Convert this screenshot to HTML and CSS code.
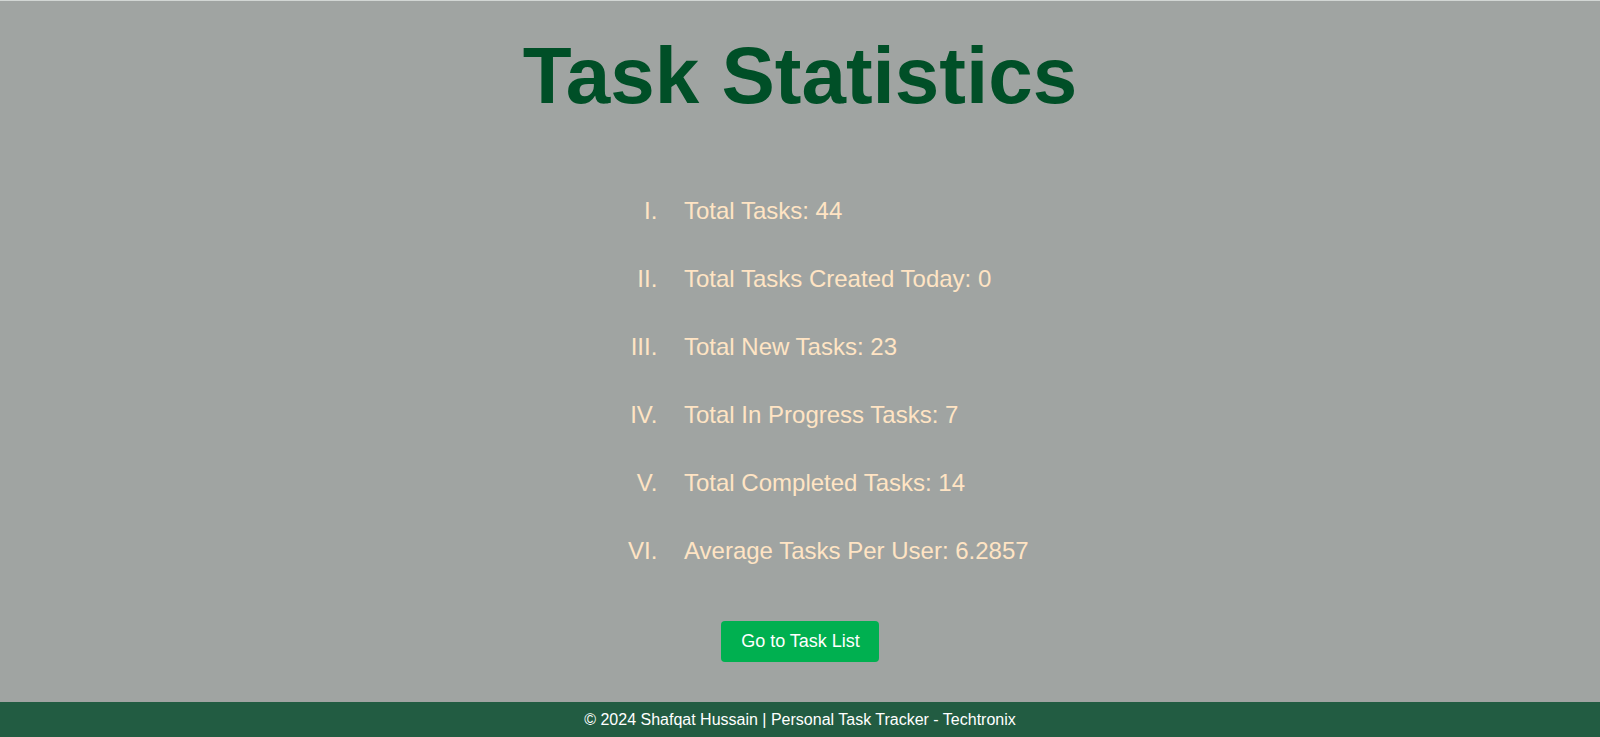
FILE: index.html
```html
<!DOCTYPE html>
<html lang="en">
<head>
<meta charset="utf-8">
<title>Task Statistics</title>
<link rel="stylesheet" href="styles.css">
</head>
<body>
<main class="page">
  <h1 class="title">Task Statistics</h1>
  <ol class="stats">
    <li class="stat">Total Tasks: 44</li>
    <li class="stat">Total Tasks Created Today: 0</li>
    <li class="stat">Total New Tasks: 23</li>
    <li class="stat">Total In Progress Tasks: 7</li>
    <li class="stat">Total Completed Tasks: 14</li>
    <li class="stat">Average Tasks Per User: 6.2857</li>
  </ol>
  <div class="actions">
    <a class="btn" href="#">Go to Task List</a>
  </div>
</main>
<footer class="footer">© 2024 Shafqat Hussain | Personal Task Tracker - Techtronix</footer>
</body>
</html>
```
FILE: styles.css
```css
html, body {
  margin: 0;
  padding: 0;
  height: 100%;
}
body {
  background: #a0a4a2;
  font-family: "Liberation Sans", Arial, sans-serif;
  border-top: 1px solid #d2d6d4;
  box-sizing: border-box;
  display: flex;
  flex-direction: column;
}
.page {
  flex: 1;
  display: flex;
  flex-direction: column;
}
.title {
  margin: 29px 0 0;
  text-align: center;
  font-size: 80px;
  font-weight: bold;
  color: #004f27;
  line-height: normal;
}
.stats {
  list-style: upper-roman;
  margin: 55px 0 0;
  padding: 0 0 0 664px;
  color: #ffe4c4;
  font-size: 24px;
}
.stat {
  padding: 20px 0 20px 20px;
}
.actions {
  display: flex;
  justify-content: center;
  margin-top: 36px;
}
.btn {
  display: inline-block;
  background: #00b050;
  color: #ffffff;
  text-decoration: none;
  font-size: 18px;
  line-height: 21px;
  padding: 10px 19px 10px 20px;
  border-radius: 4px;
}
.footer {
  background: #225c42;
  color: #ffffff;
  text-align: center;
  font-size: 16px;
  line-height: 19px;
  padding: 8px 0;
}
```
